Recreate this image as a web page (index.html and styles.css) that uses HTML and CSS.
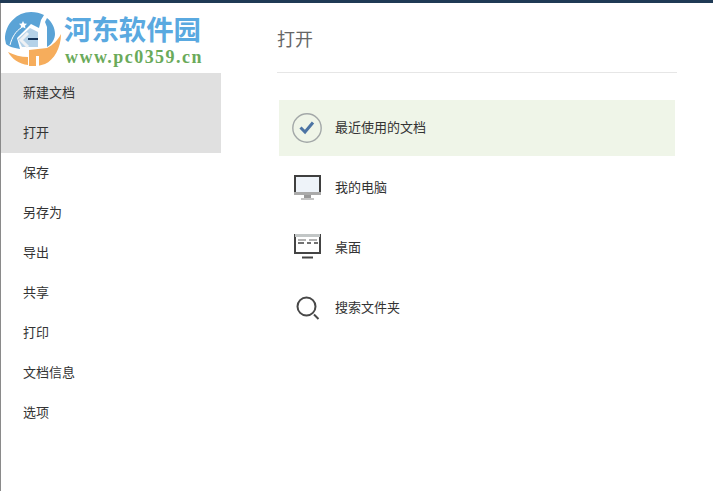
FILE: index.html
```html
<!DOCTYPE html>
<html lang="zh">
<head>
<meta charset="utf-8">
<title>打开</title>
<link rel="stylesheet" href="styles.css">
</head>
<body>
<div class="topbar"></div>
<div class="app">
  <aside class="side">
    <div class="brand">
      <svg class="logo" width="63" height="70" viewBox="1 3 63 70">
        <path d="M5 39C5 24 17 12 31 12C36 12 40 13 44 15L41 20L39 28L31 24L17 38L20 49C13 48 8 46 6 44Z" fill="#5aa3d6"/>
        <path d="M47 18C52 22 55 28 55 34C55 39 52 44 47 47L47 27L45 22Z" fill="#5aa3d6"/>
        <path d="M18 39L30 28L38 32L38 47L22 47Z" fill="#b5d2e8"/>
        <path d="M28 33L21 40L28 47" stroke="#eef1f4" stroke-width="3" fill="none"/>
        <path d="M28 39H38" stroke="#14345a" stroke-width="2"/>
        <path d="M10 45C12 37 16 31 21 28" stroke="#fff" stroke-width="1" fill="none"/>
        <path d="M23 21l1.200 2.500 2.800.3-2 2 .5 2.800-2.500-1.400-2.500 1.400.5-2.800-2-2 2.800-.3z" fill="#fff"/>
        <path d="M8 52C14 55 21 57 28 57L28 65C19 64 12 59 8 52Z" fill="#f6ad5c"/>
        <path d="M29 50L47 48C53 45 58 40 61 34C61 48 54 60 45 64L38 66L29 66Z" fill="#f6ad5c"/>
        <path d="M36 56H39V66H36Z" fill="#fff"/>
      </svg>
      <div class="brand-text">
        <div class="brand-cn">河东软件园</div>
        <div class="brand-url">www.pc0359.cn</div>
      </div>
    </div>
    <nav class="menu">
      <a class="item on">新建文档</a>
      <a class="item on">打开</a>
      <a class="item">保存</a>
      <a class="item">另存为</a>
      <a class="item">导出</a>
      <a class="item">共享</a>
      <a class="item">打印</a>
      <a class="item">文档信息</a>
      <a class="item">选项</a>
    </nav>
  </aside>
  <main class="main">
    <h1 class="title">打开</h1>
    <div class="list">
      <div class="row active">
        <svg class="icon" width="32" height="32" viewBox="0 0 32 32">
          <circle cx="16" cy="16" r="14.2" fill="none" stroke="#a3a8a8" stroke-width="1.4"/>
          <path d="M9.500 15.500L14 20L22 10.500" fill="none" stroke="#4c74a4" stroke-width="3"/>
        </svg>
        <span>最近使用的文档</span>
      </div>
      <div class="row">
        <svg class="icon" width="32" height="32" viewBox="0 0 32 32">
          <rect x="4" y="4" width="25" height="18" fill="#eef3f9" stroke="#3f3f3f" stroke-width="2"/>
          <rect x="3" y="20" width="27" height="3" fill="#aaa"/>
          <rect x="13" y="23" width="7" height="3" fill="#999"/>
          <rect x="10" y="26" width="13" height="2" fill="#c4c4c4"/>
        </svg>
        <span>我的电脑</span>
      </div>
      <div class="row">
        <svg class="icon" width="32" height="32" viewBox="0 0 32 32">
          <rect x="4" y="3" width="25" height="18" fill="#fff" stroke="#444" stroke-width="2"/>
          <rect x="4" y="2" width="25" height="3" fill="#c2c6c6"/>
          <path d="M7 8h8M18 8h8" stroke="#666" stroke-width="1"/>
          <path d="M7 11h6M16 11h4M23 11h4" stroke="#444" stroke-width="1.400"/>
          <path d="M11 25.500h11" stroke="#444" stroke-width="2"/>
        </svg>
        <span>桌面</span>
      </div>
      <div class="row">
        <svg class="icon" width="32" height="32" viewBox="0 0 32 32">
          <circle cx="15.500" cy="14.500" r="9" fill="none" stroke="#484848" stroke-width="2"/>
          <path d="M23 22.500L27.500 27" stroke="#484848" stroke-width="2"/>
        </svg>
        <span>搜索文件夹</span>
      </div>
    </div>
  </main>
</div>
</body>
</html>
```
FILE: styles.css
```css
* { box-sizing: border-box; }
html, body { margin: 0; height: 100%; }
body {
  width: 713px;
  height: 491px;
  overflow: hidden;
  background: #fff;
  font-family: "Liberation Sans", "Noto Sans CJK SC", sans-serif;
  color: #333;
  display: flex;
  flex-direction: column;
}
.topbar { height: 3px; background: #1f3a55; flex: none; }
.app {
  flex: 1;
  display: flex;
  border-left: 1px solid #8a8a8a;
}
.side { width: 220px; flex: none; }
.brand { height: 70px; display: flex; align-items: flex-start; }
.logo { flex: none; }
.brand-text { margin-left: 0; padding-top: 10px; }
.brand-cn {
  font-family: "Noto Sans CJK SC", sans-serif;
  font-weight: 700;
  font-size: 27.4px;
  line-height: 30px;
  color: #5aa9e0;
  white-space: nowrap;
  width: 137px;
}
.brand-url {
  font-family: "Liberation Serif", serif;
  font-weight: 700;
  font-size: 18px;
  letter-spacing: 1.45px;
  line-height: 18px;
  margin: 5px 0 0 1px;
  color: #6aaa5a;
  white-space: nowrap;
}
.menu { display: flex; flex-direction: column; }
.item {
  height: 40px;
  display: flex;
  align-items: center;
  padding: 0 0 4px 22px;
  font-size: 13px;
  color: #333;
}
.item.on { background: #e0e0e0; }
.main { flex: 1; padding: 0 36px 0 56px; }
.title {
  margin: 0;
  height: 70px;
  padding-top: 23px;
  border-bottom: 1px solid #e6e6e6;
  font-size: 18px;
  line-height: 25px;
  font-weight: 400;
  color: #666;
  font-family: "Noto Sans CJK SC", sans-serif;
}
.list { margin: 27px 2px 0 2px; display: flex; flex-direction: column; gap: 4px; }
.row {
  height: 56px;
  display: flex;
  align-items: center;
  gap: 12px;
  padding-left: 12px;
  font-size: 13px;
  color: #333;
}
.row span { margin-bottom: 3px; }
.row.active { background: #eff5e8; }
.icon { flex: none; }
```
